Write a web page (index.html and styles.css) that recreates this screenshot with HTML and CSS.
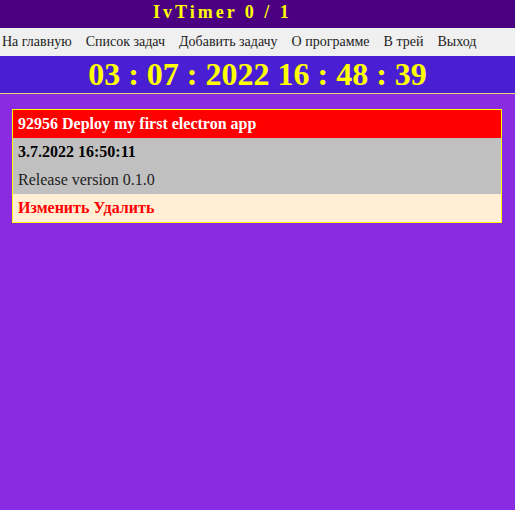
FILE: index.html
```html
<!DOCTYPE html>
<html lang="ru">
<head>
<meta charset="utf-8">
<title>IvTimer</title>
<link rel="stylesheet" href="styles.css">
</head>
<body>
<header class="title-bar">
  <h1 class="title">IvTimer 0 / 1</h1>
</header>
<nav class="menu">
  <a class="menu-item" href="#">На главную</a>
  <a class="menu-item" href="#">Список задач</a>
  <a class="menu-item" href="#">Добавить задачу</a>
  <a class="menu-item" href="#">О программе</a>
  <a class="menu-item" href="#">В трей</a>
  <a class="menu-item" href="#">Выход</a>
</nav>
<div class="clock">03 : 07 : 2022 16 : 48 : 39</div>
<main class="content">
  <section class="task">
    <div class="task-head">92956 Deploy my first electron app</div>
    <div class="task-date">3.7.2022 16:50:11</div>
    <div class="task-desc">Release version 0.1.0</div>
    <div class="task-actions"><a href="#" class="action">Изменить</a> <a href="#" class="action">Удалить</a></div>
  </section>
</main>
</body>
</html>
```
FILE: styles.css
```css
html, body {
  margin: 0;
  padding: 0;
}
body {
  background: #8a2be2;
  font-family: "Liberation Serif", "Times New Roman", serif;
  width: 515px;
  min-height: 510px;
}
.title-bar {
  background: #4b0082;
  height: 28px;
  padding-left: 153px;
  box-sizing: border-box;
}
.title {
  margin: 0;
  font-size: 18px;
  font-weight: bold;
  letter-spacing: 3px;
  color: #ffff00;
  line-height: 24px;
}
.menu {
  background: #f0f0f0;
  height: 28px;
  display: flex;
  align-items: center;
  padding-left: 2px;
  gap: 14px;
}
.menu-item {
  font-size: 14px;
  color: #222;
  text-decoration: none;
}
.clock {
  background: #4a1fd3;
  height: 37px;
  line-height: 37px;
  text-align: center;
  color: #ffff00;
  font-weight: bold;
  font-size: 32px;
  border-bottom: 1px solid #e8d870;
}
.content {
  padding: 15px 13px 0 12px;
}
.task {
  border: 1px solid #ffff00;
  font-size: 16px;
}
.task-head {
  background: #ff0000;
  color: #fff;
  font-weight: bold;
  height: 28px;
  line-height: 28px;
  padding-left: 5px;
}
.task-date {
  background: #c0c0c0;
  color: #000;
  font-weight: bold;
  height: 28px;
  line-height: 28px;
  padding-left: 5px;
}
.task-desc {
  background: #c0c0c0;
  color: #222;
  height: 28px;
  line-height: 28px;
  padding-left: 5px;
}
.task-actions {
  background: #ffefd5;
  height: 28px;
  line-height: 28px;
  padding-left: 5px;
  font-weight: bold;
}
.action {
  color: #ff0000;
  text-decoration: none;
}
```
